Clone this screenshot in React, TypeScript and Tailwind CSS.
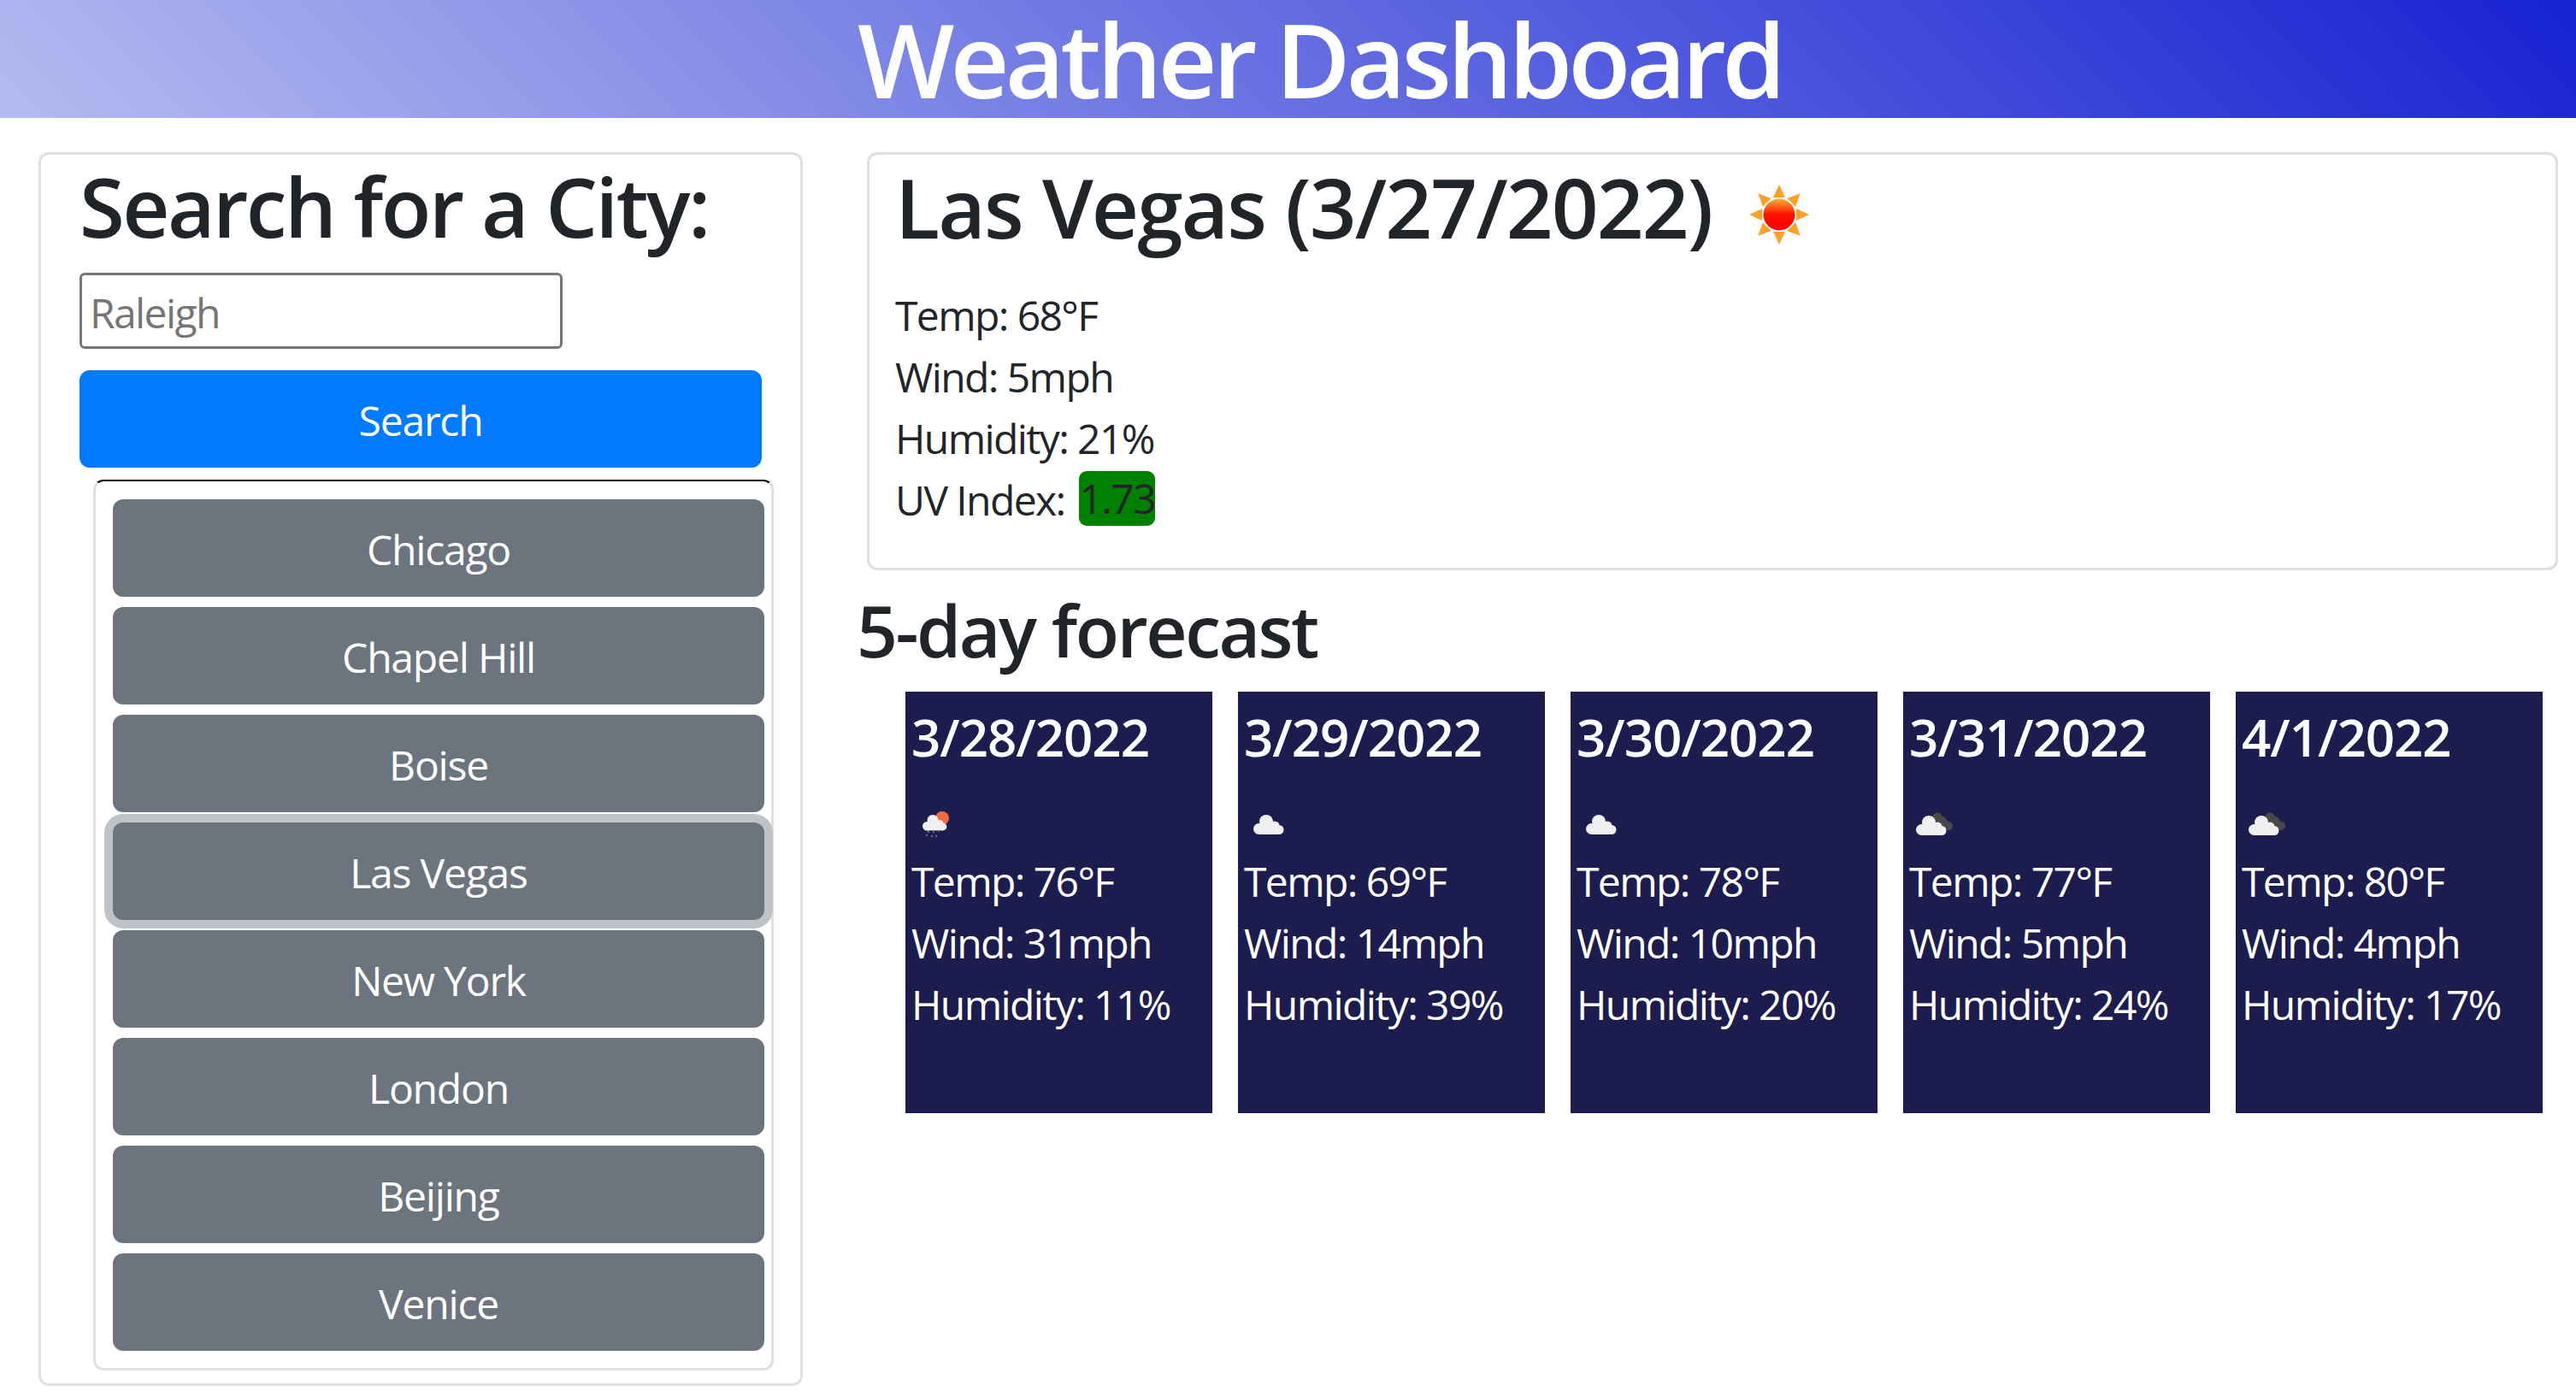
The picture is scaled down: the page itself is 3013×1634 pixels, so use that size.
import React from "react";

const font = "font-['Open_Sans','Noto_Sans',sans-serif]";

const cities = ["Chicago", "Chapel Hill", "Boise", "Las Vegas", "New York", "London", "Beijing", "Venice"];

type IconKind = "rain" | "cloud" | "dark";

interface Day {
  date: string;
  temp: number;
  wind: number;
  humidity: number;
  icon: IconKind;
}

const days: Day[] = [
  { date: "3/28/2022", temp: 76, wind: 31, humidity: 11, icon: "rain" },
  { date: "3/29/2022", temp: 69, wind: 14, humidity: 39, icon: "cloud" },
  { date: "3/30/2022", temp: 78, wind: 10, humidity: 20, icon: "cloud" },
  { date: "3/31/2022", temp: 77, wind: 5, humidity: 24, icon: "dark" },
  { date: "4/1/2022", temp: 80, wind: 4, humidity: 17, icon: "dark" },
];

const SunIcon = () => (
  <svg viewBox="0 0 70 70" className="w-[70px] h-[70px]">
    <defs>
      <linearGradient id="sunBody" x1="0" y1="0" x2="0" y2="1">
        <stop offset="0" stopColor="#ffb030" />
        <stop offset="0.5" stopColor="#ff1000" />
        <stop offset="1" stopColor="#ff0000" />
      </linearGradient>
    </defs>
    <g fill="#ffa028">
      {[0, 45, 90, 135, 180, 225, 270, 315].map((a) => (
        <path key={a} d="M35 0l7 15H28z" transform={`rotate(${a} 35 35)`} />
      ))}
    </g>
    <circle cx="35" cy="35" r="20" fill="#fff" />
    <circle cx="35" cy="35" r="18.5" fill="url(#sunBody)" />
  </svg>
);

// cloud shape drawn in a 36x23 box
const Cloud = ({ x, y, scale = 1 }: { x: number; y: number; scale?: number }) => (
  <g transform={`translate(${x} ${y}) scale(${scale})`} fill="#f0f0f0">
    <circle cx="6.5" cy="16.5" r="6.5" />
    <circle cx="15" cy="8" r="8" />
    <circle cx="25" cy="13" r="5.5" />
    <circle cx="30" cy="17.5" r="5.5" />
    <rect x="6.5" y="12" width="23.5" height="11" />
  </g>
);

const WeatherIcon = ({ kind }: { kind: IconKind }) => (
  <svg viewBox="0 0 60 50" className="w-[60px] h-[50px]">
    {kind === "rain" && (
      <>
        <circle cx="36" cy="17" r="8" fill="#ef6c42" />
        <Cloud x={13} y={13} scale={0.8} />
        <g fill="#6b6b6b">
          <circle cx="20" cy="33" r="1.2" />
          <circle cx="26" cy="33" r="1.2" />
          <circle cx="32" cy="32" r="1.2" />
          <circle cx="18" cy="37" r="1.2" />
          <circle cx="24" cy="38" r="1.2" />
          <circle cx="29" cy="38" r="1.2" />
        </g>
      </>
    )}
    {kind === "cloud" && <Cloud x={11} y={13} />}
    {kind === "dark" && (
      <>
        <g fill="#484848">
          <circle cx="33" cy="16" r="5.5" />
          <circle cx="38" cy="20" r="5.5" />
          <circle cx="41" cy="23" r="5" />
          <circle cx="46" cy="26" r="5" />
        </g>
        <Cloud x={8} y={14} />
      </>
    )}
  </svg>
);

const App = () => {
  return (
    <div className={`${font} min-h-[1634px] bg-white text-[#212529] text-[48px] leading-[72px] tracking-[-1.6px]`}>
      <header className="h-[138px] flex items-center justify-center pl-[74px] bg-[linear-gradient(45deg,#b4bbf0,#1722d2)]">
        <h1 className="text-[120px] leading-[138px] font-semibold text-white tracking-[-4.9px]">Weather Dashboard</h1>
      </header>

      <main className="flex items-start pt-[40px] pl-[45px]">
        <section className="w-[894px] border-[3px] border-[#dfdfdf] rounded-[12px] pl-[45px] pb-[15px]">
          <h2 className="text-[96px] leading-[115px] font-semibold pt-[2px] mb-[21px] tracking-[-2.6px]">Search for a City:</h2>
          <input
            placeholder="Raleigh"
            className="block w-[565px] h-[89px] border-[3px] border-[#767676] rounded-[6px] px-[9px] pt-[3px] placeholder:text-[#757575]"
          />
          <button className="block w-[798px] h-[114px] pt-[3px] mt-[25px] rounded-[12px] bg-[#007bff] text-white tracking-[-1.2px]">
            Search
          </button>
          <div className="ml-[16px] mt-[14px] w-[796px] border-[3px] border-[#dfdfdf] border-t-[2px] border-t-black rounded-[12px] pt-[21px] pb-[20px] pl-[20px] pr-[8px] flex flex-col gap-[12px]">
            {cities.map((city) => (
              <button
                key={city}
                className={`h-[114px] w-[762px] pt-[3px] rounded-[12px] bg-[#6c757d] text-white tracking-[-1.2px] ${
                  city === "Las Vegas" ? "shadow-[0_0_0_10px_#bfc3c7]" : ""
                }`}
              >
                {city}
              </button>
            ))}
          </div>
        </section>

        <div className="ml-[75px] w-[1978px]">
          <section className="h-[489px] border-[3px] border-[#dfdfdf] rounded-[12px] pl-[30px]">
            <div className="flex items-center h-[120px]">
              <h2 className="text-[96px] leading-[115px] font-semibold tracking-[-1.9px]">Las Vegas (3/27/2022)</h2>
              <span className="ml-[44px] mt-[20px] blur-[0.6px]">
                <SunIcon />
              </span>
            </div>
            <div className="mt-[32px]">
              <p>Temp: 68°F</p>
              <p>Wind: 5mph</p>
              <p>Humidity: 21%</p>
              <p>
                UV Index:{" "}
                <span className="inline-block h-[64px] ml-[6px] leading-[64px] align-top mt-[2px] rounded-[9px] bg-[#008000]">1.73</span>
              </p>
            </div>
          </section>

          <h3 className="text-[84px] leading-[100px] font-semibold mt-[20px] ml-[-12px] tracking-[-2.5px]">5-day forecast</h3>

          <div className="flex gap-[30px] ml-[45px] mt-[22px]">
            {days.map((d) => (
              <div key={d.date} className="w-[359px] h-[493px] bg-[#1c1c4e] text-white pl-[7px] pt-[17px]">
                <h5 className="text-[60px] leading-[72px] font-semibold tracking-[-1px]">{d.date}</h5>
                <div className="h-[97px] pt-[42px]">
                  <WeatherIcon kind={d.icon} />
                </div>
                <p>Temp: {d.temp}°F</p>
                <p>Wind: {d.wind}mph</p>
                <p>Humidity: {d.humidity}%</p>
              </div>
            ))}
          </div>
        </div>
      </main>
    </div>
  );
};

export default App;
